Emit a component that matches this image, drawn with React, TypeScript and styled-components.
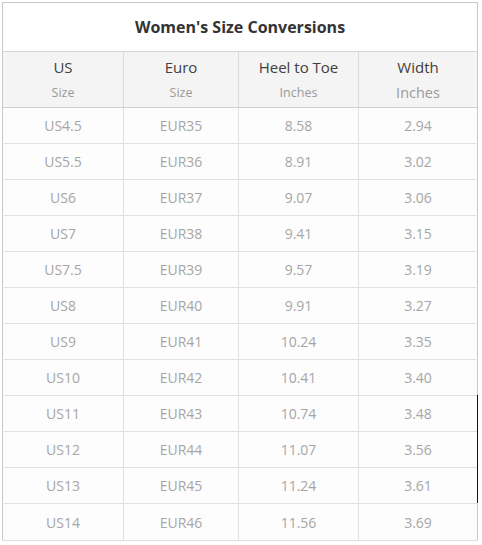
import React from "react";
import styled, { createGlobalStyle } from "styled-components";

const Global = createGlobalStyle`
  html, body { margin: 0; padding: 0; background: #fff; }
  body { font-family: "Open Sans", "Liberation Sans", sans-serif; }
`;

const Wrap = styled.div`
  position: relative;
  padding: 2px 0 0 2px;
  width: 478px;
  &::after {
    content: "";
    position: absolute;
    left: 477px;
    top: 395px;
    width: 1px;
    height: 108px;
    background: #111;
  }
`;

const Table = styled.table`
  border-collapse: collapse;
  width: 475px;
  table-layout: fixed;
  border: 1px solid #c9c9c9;
`;

const TitleCell = styled.th`
  height: 48px;
  padding: 0;
  font-size: 16px;
  font-weight: 700;
  color: #333;
  text-align: center;
  border-bottom: 1px solid #d4d4d4;
  background: #fff;
`;

const HeadCell = styled.th`
  height: 55px;
  padding: 0;
  background: #f4f4f4;
  border-left: 1px solid #dcdcdc;
  border-bottom: 1px solid #d0d0d0;
  text-align: center;
  vertical-align: middle;
  font-weight: 400;
  &:first-child { border-left: none; }
`;

const HeadMain = styled.div`
  font-size: 15px;
  color: #404040;
  line-height: 20px;
`;

const HeadSub = styled.div<{ $big?: boolean }>`
  font-size: ${(p) => (p.$big ? "14.5px" : "12.5px")};
  color: #9a9a9a;
  line-height: 20px;
  margin-top: 6px;
`;

const Row = styled.tr<{ $last?: boolean }>`
  height: ${(p) => (p.$last ? "37px" : "36px")};
  border-bottom: 1px solid #e0e0e0;
`;

const Cell = styled.td`
  padding: 0;
  text-align: center;
  vertical-align: middle;
  font-size: 14px;
  color: #a6a6a6;
  border-left: 1px solid #e0e0e0;
  background: #fdfdfd;
  &:first-child { border-left: none; }
`;

const data: [string, string, string, string][] = [
  ["US4.5", "EUR35", "8.58", "2.94"],
  ["US5.5", "EUR36", "8.91", "3.02"],
  ["US6", "EUR37", "9.07", "3.06"],
  ["US7", "EUR38", "9.41", "3.15"],
  ["US7.5", "EUR39", "9.57", "3.19"],
  ["US8", "EUR40", "9.91", "3.27"],
  ["US9", "EUR41", "10.24", "3.35"],
  ["US10", "EUR42", "10.41", "3.40"],
  ["US11", "EUR43", "10.74", "3.48"],
  ["US12", "EUR44", "11.07", "3.56"],
  ["US13", "EUR45", "11.24", "3.61"],
  ["US14", "EUR46", "11.56", "3.69"],
];

export default function App() {
  return (
    <Wrap>
      <Global />
      <Table>
        <colgroup>
          <col style={{ width: 121 }} />
          <col style={{ width: 115 }} />
          <col style={{ width: 120 }} />
          <col style={{ width: 119 }} />
        </colgroup>
        <thead>
          <tr>
            <TitleCell colSpan={4}>Women's Size Conversions</TitleCell>
          </tr>
          <tr>
            <HeadCell>
              <HeadMain>US</HeadMain>
              <HeadSub>Size</HeadSub>
            </HeadCell>
            <HeadCell>
              <HeadMain>Euro</HeadMain>
              <HeadSub>Size</HeadSub>
            </HeadCell>
            <HeadCell>
              <HeadMain>Heel to Toe</HeadMain>
              <HeadSub>Inches</HeadSub>
            </HeadCell>
            <HeadCell>
              <HeadMain>Width</HeadMain>
              <HeadSub $big>Inches</HeadSub>
            </HeadCell>
          </tr>
        </thead>
        <tbody>
          {data.map((r, i) => (
            <Row key={r[0]} $last={i === data.length - 1}>
              {r.map((v, j) => (
                <Cell key={j}>{v}</Cell>
              ))}
            </Row>
          ))}
        </tbody>
      </Table>
    </Wrap>
  );
}
